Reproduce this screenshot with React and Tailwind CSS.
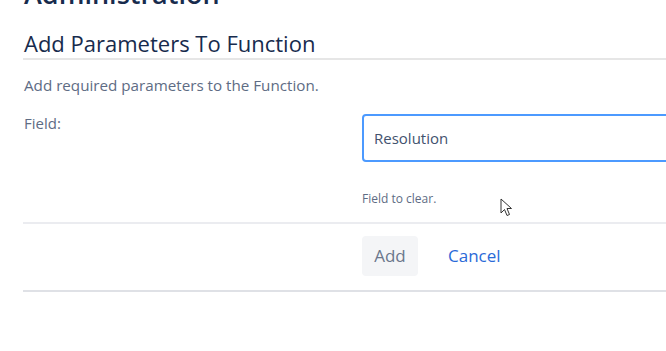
export default function App() {
  return (
    <div className="h-[351px] w-[666px] overflow-hidden bg-white" style={{ fontFamily: '"Open Sans", "Noto Sans", sans-serif' }}>
      <div className="pl-[23px] w-[760px]">
        <h1 className="mt-[-23px] text-[27px] leading-[34px] font-semibold text-[#172b4d] pl-[1px]">Administration</h1>
        <h2 className="mt-[18px] text-[22px] leading-[28px] text-[#172b4d] pl-[1px] pb-[1px] border-b-2 border-[#e6e6e6]">Add Parameters To Function</h2>
        <p className="mt-[15px] text-[15.2px] leading-[20px] text-[#5e6c84] pl-[1px]">Add required parameters to the Function.</p>
        <div className="mt-[15px] flex">
          <div className="w-[339px] shrink-0 pt-[3px] pl-[1px] text-[15px] leading-[20px] text-[#5e6c84]">Field:</div>
          <div className="flex-1 pt-[4px]">
            <div className="h-[48px] w-[360px] rounded-[4px] border-2 border-[#4c9aff] flex items-center pl-[10px] text-[15px] text-[#42526e]">Resolution</div>
            <div className="mt-[30px] text-[12px] leading-[14px] text-[#5e6c84] relative">
              Field to clear.
              <svg className="absolute left-[138px] top-[6px]" width="13" height="19" viewBox="0 0 13 19">
                <path d="M1 1 L1 15 L4.5 11.5 L7 17.5 L9.5 16.5 L7 10.5 L11.5 10.5 Z" fill="white" stroke="#333" strokeWidth="1" strokeLinejoin="round" />
              </svg>
            </div>
          </div>
        </div>
        <div className="mt-[16px] border-t-2 border-[#ebecf0]">
          <div className="flex items-center pl-[339px] pt-[12px] pb-[14px]">
            <button className="h-[40px] w-[56px] rounded-[4px] bg-[#f4f5f7] text-[17px] text-[#6b778c]">Add</button>
            <button className="ml-[30px] text-[17px] text-[#2a6ad8]">Cancel</button>
          </div>
        </div>
        <div className="border-t-2 border-[#dfe1e6]"></div>
      </div>
    </div>
  );
}
